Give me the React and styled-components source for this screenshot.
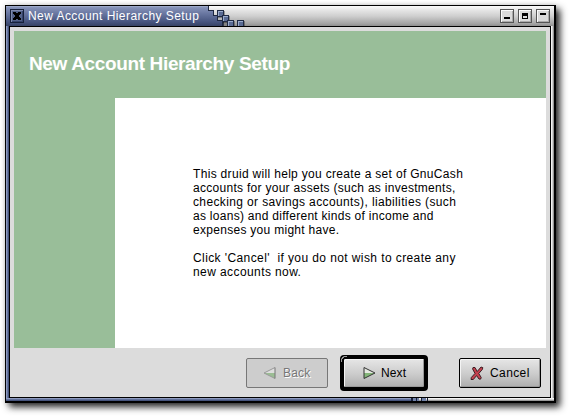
import React from "react";
import styled, { createGlobalStyle } from "styled-components";

const Global = createGlobalStyle`
  * { box-sizing: border-box; }
  html, body { margin: 0; background: #fff; overflow: hidden; }
  body { font: 12px/14px "Liberation Sans", Arial, sans-serif; color: #000; }
`;

const Desktop = styled.main`
  width: 569px;
  height: 416px;
  padding: 5px 0 0 5px;
  background: #fff;
`;

const Window = styled.section`
  display: flex;
  flex-direction: column;
  width: 551px;
  height: 398px;
  border: solid #000;
  border-width: 1px 2px 2px 1px;
  box-shadow: 4px 4px 7px rgba(0, 0, 0, 0.85), 0 0 5px rgba(0, 0, 0, 0.12);
`;

const TitleBar = styled.header`
  display: flex;
  align-items: flex-start;
  height: 20px;
  flex: none;
  background: linear-gradient(#fafafa 0, #e6e6e6 20%, #cfcfcf 50%, #a4a4a4 88%, #8f8f8f 100%);
`;

const ActiveTitle = styled.div`
  display: flex;
  align-items: flex-start;
  width: 202px;
  height: 20px;
  padding: 3px 0 0 4px;
  background: linear-gradient(#a6b1d0 0, #8592b8 8%, #67759f 40%, #46547e 80%, #374365 100%);
`;

const WindowTitle = styled.h1`
  margin: 0 0 0 4px;
  color: #fff;
  font-size: 12px;
  font-weight: 400;
  line-height: 14px;
  letter-spacing: 0.44px;
  white-space: pre;
`;

const FrameButton = styled.button`
  display: flex;
  width: 14px;
  height: 14px;
  padding: 0;
  border: 0;
  background: none;
`;

const TitleControls = styled.div`
  display: flex;
  gap: 4px;
  margin: 3px 4px 0 auto;
`;

const Frame = styled.div`
  display: flex;
  flex: 1;
  min-height: 0;
`;

const LeftEdge = styled.div`
  width: 3px;
  background: linear-gradient(90deg, #8d9abf 0 1px, #66759f 1px 2px, #46547c 2px);
`;

const RightEdge = styled.div`
  width: 3px;
  background: linear-gradient(90deg, #f4f4f4 0 1px, #cfcfcf 1px 2px, #969696 2px);
`;

const BottomEdge = styled.svg`
  display: block;
  flex: none;
  width: 548px;
  height: 3px;
`;

const Dialog = styled.div`
  display: flex;
  flex-direction: column;
  flex: 1;
  padding: 4px 4px 0;
  border: 1px solid #000;
  background: #dcdcdc;
`;

const DruidHeader = styled.div`
  height: 67px;
  padding: 21px 0 0 15px;
  background: #99be99;
`;

const Heading = styled.h2`
  margin: 0;
  color: #fff;
  font-size: 19px;
  line-height: 24px;
  letter-spacing: -0.36px;
  white-space: pre;
`;

const DruidBody = styled.div`
  display: grid;
  grid-template-columns: 101px 1fr;
  height: 250px;
`;

const SideStrip = styled.div`
  background: #99be99;
`;

const Page = styled.div`
  padding: 69px 0 0 78px;
  background: #fff;
`;

const Paragraph = styled.p`
  margin: 0 0 14px;
`;

const Line = styled.span`
  display: block;
  white-space: pre;
  letter-spacing: ${(p) => p.$spacing}px;
`;

const Actions = styled.footer`
  display: flex;
  align-items: flex-start;
  justify-content: flex-end;
  padding: 7px 5px 0 0;
`;

const DefaultRing = styled.div`
  display: flex;
  width: 88px;
  height: 36px;
  margin: 0 31px 0 12px;
  padding: 3px;
  background: radial-gradient(circle at 6px 6px, transparent 4px, #999 4.3px 5px, transparent 5.4px) 0 0 / 7px 7px no-repeat #000;
  border-radius: 4px;
`;

const Button = styled.button`
  display: flex;
  align-items: center;
  justify-content: flex-start;
  gap: ${(p) => p.$gap}px;
  width: 82px;
  height: 30px;
  margin-top: ${(p) => (p.$inset ? 0 : 3)}px;
  padding: 0 0 0 ${(p) => p.$start}px;
  border: 1px solid ${(p) => (p.disabled ? "#777" : "#000")};
  border-radius: 2px;
  background: ${(p) => (p.disabled ? "#cdcdcd" : "linear-gradient(#e6e6e6, #cbcbcb 55%, #adadad)")};
  box-shadow: ${(p) => (p.disabled ? "none" : "inset 1px 1px #f4f4f4, inset -1px -1px #999")};
  color: ${(p) => (p.disabled ? "#777" : "#000")};
  text-shadow: ${(p) => (p.disabled ? "1px 1px #fff" : "none")};
  font: 12px/14px "Liberation Sans", Arial, sans-serif;
  letter-spacing: ${(p) => p.$spacing}px;
`;

const Glyph = styled.svg`
  display: block;
  flex: none;
`;

const Trail = () => (
  <Glyph width="40" height="20" shapeRendering="crispEdges">
    <defs>
      <linearGradient id="trail" x1="0" y1="0" x2="0" y2="20" gradientUnits="userSpaceOnUse">
        <stop offset="0" stopColor="#a6b1d0" /><stop offset=".08" stopColor="#8592b8" />
        <stop offset=".4" stopColor="#67759f" /><stop offset=".8" stopColor="#46547e" /><stop offset="1" stopColor="#374365" />
      </linearGradient>
    </defs>
    <path d="M0 0v4h5v5h5v5h5v6H0z" fill="url(#trail)" />
    <path d="M0 0h1v4h5v5h4v5h5v6h-1v-5H9v-5H5V5H0z" fill="#1d2740" />
    <path d="M10 10h4v4h-4z" fill="#b9b9b9" />
    <path d="M15 15h5v5h-5z" fill="#30384a" />
    <path d="M16 16h3v4h-3z" fill="#828282" />
    {[[9, 4], [14, 9], [19, 14], [29, 14]].map(([x, y]) => (
      <g key={x} transform={`translate(${x} ${y})`}>
        <path d="M1 1h7v7H1z" fill="#000" opacity=".3" />
        <path d="M0 0h7v7H0z" fill="#202b45" />
        <path d="M1 1h5v5H1z" fill="#5b6c94" />
        <path d="M1 1h5v1H2v4H1z" fill="#9baccc" />
      </g>
    ))}
  </Glyph>
);

const CloseIcon = () => (
  <Glyph width="14" height="14" shapeRendering="crispEdges">
    <path d="M0 0h14v14H0z" fill="#17213b" />
    <path d="M1 1h12v12H1z" fill="#7d89ad" />
    <path d="M2 2h11v11H2z" fill="#35436a" />
    <path d="M2 2h10v10H2z" fill="#536289" />
    <path d="M3 3h3v1h2V3h3v2h-1v1H9v2h1v1h1v2H8v-1H6v1H3V9h1V8h1V6H4V5H3z" fill="#000" />
  </Glyph>
);

const markPaths = {
  minimize: "M4 8h6v2H4z",
  maximize: "M4 4h6v6H4zM5 7v2h4V7z",
  shade: "M4 4h6v2H4z",
};

const Control = ({ kind }) => (
  <FrameButton aria-label={kind}>
    <Glyph width="14" height="14" shapeRendering="crispEdges">
      <path d="M0 0h14v14H0z" fill="#555" />
      <path d="M1 1h12v12H1z" fill="#fafafa" />
      <path d="M2 2h11v11H2z" fill="#aaa" />
      <path d="M2 2h10v10H2z" fill="#dadada" />
      <path d={markPaths[kind]} fill="#000" fillRule="evenodd" />
    </Glyph>
  </FrameButton>
);

const BackIcon = () => (
  <Glyph width="13" height="12">
    <path d="M12 .5v11L1 6z" fill="#dedede" />
    <path d="M12 6v5.5L1 6z" fill="#9bbd94" />
    <path d="M12 .5L1 6l11 5.5" fill="none" stroke="#999" />
    <path d="M12 .5v11" stroke="#777" />
  </Glyph>
);

const NextIcon = () => (
  <Glyph width="13" height="12">
    <path d="M1 .5v11L12 6z" fill="#e5e9e1" />
    <path d="M1 6v5.5L12 6z" fill="#83b578" />
    <path d="M1 .5v11L12 6z" fill="none" stroke="#333" />
  </Glyph>
);

const CancelIcon = () => (
  <Glyph width="14" height="15">
    <path d="M3 1.5h2L7.2 5.5 11 1l1.8.6-.4 1.8-3.6 4.1 2.4 4-.5 1.6H9L6.6 9.6 3.3 13.5H1l.3-2L5 7.4 2.6 3z" fill="#c4414f" stroke="#30151b" strokeWidth=".9" strokeLinejoin="round" />
  </Glyph>
);

const paragraphs = [
  [
    ["This druid will help you create a set of GnuCash", 0.32],
    ["accounts for your assets (such as investments,", 0.285],
    ["checking or savings accounts), liabilities (such", 0.37],
    ["as loans) and different kinds of income and", 0.28],
    ["expenses you might have.", 0.29],
  ],
  [
    ["Click 'Cancel'  if you do not wish to create any", 0.405],
    ["new accounts now.", 0.41],
  ],
];

export default function App() {
  return (
    <Desktop>
      <Global />
      <Window>
        <TitleBar>
          <ActiveTitle>
            <FrameButton aria-label="Close"><CloseIcon /></FrameButton>
            <WindowTitle>New Account Hierarchy Setup</WindowTitle>
          </ActiveTitle>
          <Trail />
          <TitleControls>
            <Control kind="minimize" />
            <Control kind="maximize" />
            <Control kind="shade" />
          </TitleControls>
        </TitleBar>
        <Frame>
          <LeftEdge />
          <Dialog>
            <DruidHeader>
              <Heading>New Account Hierarchy Setup</Heading>
            </DruidHeader>
            <DruidBody>
              <SideStrip />
              <Page>
                {paragraphs.map((lines, i) => (
                  <Paragraph key={i}>
                    {lines.map(([text, spacing]) => <Line key={text} $spacing={spacing}>{text}</Line>)}
                  </Paragraph>
                ))}
              </Page>
            </DruidBody>
            <Actions>
              <Button disabled $start={16} $gap={7} $spacing={0.2}><BackIcon />Back</Button>
              <DefaultRing>
                <Button $inset $start={19} $gap={5} $spacing={0.1}><NextIcon />Next</Button>
              </DefaultRing>
              <Button $start={10} $gap={6} $spacing={0.4}><CancelIcon />Cancel</Button>
            </Actions>
          </Dialog>
          <RightEdge />
        </Frame>
        <BottomEdge shapeRendering="crispEdges">
          <path d="M0 0h405v1H0z" fill="#8d9abf" />
          <path d="M0 1h405v1H0z" fill="#62719b" />
          <path d="M0 2h405v1H0z" fill="#46547c" />
          <path d="M405 0h143v1H405z" fill="#f4f4f4" />
          <path d="M405 1h143v1H405z" fill="#d4d4d4" />
          <path d="M405 2h143v1H405z" fill="#999" />
          <path d="M405 0h2v3h-2zM410 0h1v3h-1zM415 0h1v3h-1zM421 0h1v3h-1z" fill="#17203a" />
          <path d="M407 0h3v3h-3zM411 0h2v3h-2zM416 0h4v3h-4z" fill="#7182a8" />
        </BottomEdge>
      </Window>
    </Desktop>
  );
}
